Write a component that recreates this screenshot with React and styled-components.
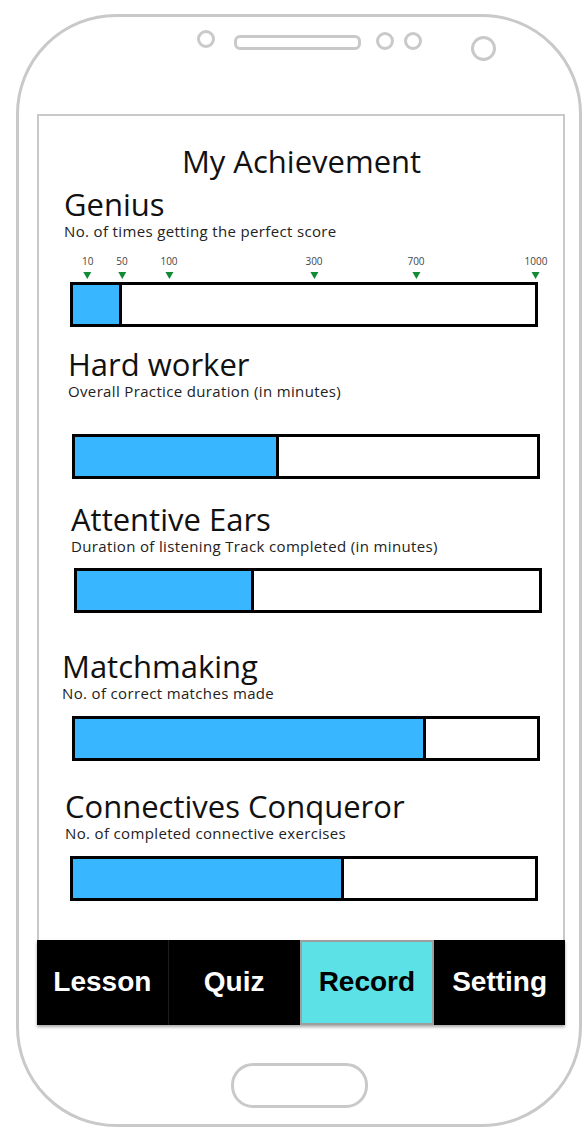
import React from 'react';
import styled, { createGlobalStyle } from 'styled-components';

// achievement screen inside a phone frame

const GlobalStyle = createGlobalStyle`
  body {
    margin: 0;
    background: #fff;
    font-family: "Open Sans", "Liberation Sans", sans-serif;
  }
`;

const Phone = styled.div`
  box-sizing: border-box;
  margin: 14px 0 0 16px;
  width: 566px;
  height: 1113px;
  border: 3px solid #c9c9c9;
  border-radius: 100px;
  display: flex;
  flex-direction: column;
  background: #fff;
`;

const Header = styled.div`
  height: 97px;
  display: flex;
  align-items: flex-start;
  padding: 13px 0 0 178px;
  box-sizing: border-box;
`;

const Dot = styled.div`
  box-sizing: border-box;
  width: ${(p) => p.$size}px;
  height: ${(p) => p.$size}px;
  border: 3px solid #c9c9c9;
  border-radius: 50%;
  margin-left: ${(p) => p.$gap || 0}px;
  margin-top: ${(p) => p.$drop || 0}px;
`;

const Speaker = styled.div`
  box-sizing: border-box;
  width: 127px;
  height: 15px;
  margin: 5px 0 0 19px;
  border: 3px solid #c9c9c9;
  border-radius: 6px;
`;

const Screen = styled.div`
  width: 528px;
  height: 911px;
  margin-left: 18px;
  display: flex;
  flex-direction: column;
`;

const Content = styled.div`
  flex: 1;
  box-sizing: border-box;
  border: 2px solid #c9c9c9;
  border-bottom: none;
  padding-top: 30px;
  display: flex;
  flex-direction: column;
`;

const Title = styled.h1`
  margin: 0;
  font-size: 31px;
  line-height: 31px;
  font-weight: 400;
  text-align: center;
  color: #111;
  padding-left: 1px;
`;

const Section = styled.section`
  margin-top: ${(p) => p.$top}px;
  display: flex;
  flex-direction: column;
`;

const Heading = styled.h2`
  margin: 0 0 5px ${(p) => p.$indent}px;
  font-size: 31px;
  line-height: 30px;
  font-weight: 400;
  color: #111;
`;

const Sub = styled.p`
  margin: 0 0 ${(p) => p.$gap}px ${(p) => p.$indent}px;
  font-size: 15px;
  line-height: 14px;
  letter-spacing: 0.35px;
  color: #222;
`;

const TickRow = styled.div`
  position: relative;
  width: 468px;
  height: 44px;
  margin-left: ${(p) => p.$indent}px;
`;

const Tick = styled.div`
  position: absolute;
  top: 18px;
  transform: translateX(-50%);
  display: flex;
  flex-direction: column;
  align-items: center;
  font-size: 10px;
  line-height: 11px;
  color: #444;
`;

const Arrow = styled.div`
  margin-top: 5px;
  width: 0;
  height: 0;
  border-left: 4.5px solid transparent;
  border-right: 4.5px solid transparent;
  border-top: 7px solid #138a36;
`;

const Bar = styled.div`
  box-sizing: border-box;
  width: 468px;
  height: 45px;
  margin-left: ${(p) => p.$indent}px;
  border: 3px solid #000;
  display: flex;
`;

const Fill = styled.div`
  box-sizing: border-box;
  height: 100%;
  background: #38b6ff;
  border-right: 3px solid #000;
`;

const Nav = styled.nav`
  height: 85px;
  display: flex;
  background: #000;
  box-shadow: 0 2px 3px rgba(0, 0, 0, 0.35);
`;

const Tab = styled.div`
  flex: 1;
  box-sizing: border-box;
  display: flex;
  align-items: center;
  justify-content: center;
  font-family: "Liberation Sans", Arial, sans-serif;
  font-weight: 700;
  font-size: 28px;
  padding-bottom: 2px;
  color: ${(p) => (p.$active ? '#000' : '#fff')};
  background: ${(p) => (p.$active ? '#5ce1e6' : '#000')};
  border: ${(p) => (p.$active ? '2px solid #9e9e9e' : 'none')};
  border-right: ${(p) => (p.$first ? '1px solid #1c1c1c' : '')};
`;

const Bottom = styled.div`
  flex: 1;
  display: flex;
  justify-content: center;
  padding-top: 38px;
`;

const HomeButton = styled.div`
  box-sizing: border-box;
  width: 137px;
  height: 45px;
  border: 3px solid #c9c9c9;
  border-radius: 22px;
`;

const ticks = [
  { label: '10', x: 17.7 },
  { label: '50', x: 52 },
  { label: '100', x: 99 },
  { label: '300', x: 244 },
  { label: '700', x: 346 },
  { label: '1000', x: 466 },
];

const achievements = [
  { title: 'Genius', sub: 'No. of times getting the perfect score', top: 12, text: 25, bar: 31, gap: 0, fill: 49, ticks: true },
  { title: 'Hard worker', sub: 'Overall Practice duration (in minutes)', top: 22, text: 29, bar: 33, gap: 36, fill: 204 },
  { title: 'Attentive Ears', sub: 'Duration of listening Track completed (in minutes)', top: 25, text: 32, bar: 35, gap: 15, fill: 177 },
  { title: 'Matchmaking', sub: 'No. of correct matches made', top: 38, text: 23, bar: 33, gap: 16, fill: 351 },
  { title: 'Connectives Conqueror', sub: 'No. of completed connective exercises', top: 30, text: 26, bar: 31, gap: 16, fill: 271 },
];

const tabs = ['Lesson', 'Quiz', 'Record', 'Setting'];

function App() {
  return (
    <>
      <GlobalStyle />
      <Phone>
        <Header>
          <Dot $size={18} />
          <Speaker />
          <Dot $size={18} $gap={15} $drop={2} />
          <Dot $size={18} $gap={10} $drop={2} />
          <Dot $size={25} $gap={49} $drop={6} />
        </Header>
        <Screen>
          <Content>
            <Title>My Achievement</Title>
            {achievements.map((a) => (
              <Section key={a.title} $top={a.top}>
                <Heading $indent={a.text}>{a.title}</Heading>
                <Sub $indent={a.text} $gap={a.gap}>{a.sub}</Sub>
                {a.ticks && (
                  <TickRow $indent={a.bar}>
                    {ticks.map((t) => (
                      <Tick key={t.label} style={{ left: t.x }}>
                        {t.label}
                        <Arrow />
                      </Tick>
                    ))}
                  </TickRow>
                )}
                <Bar $indent={a.bar}>
                  <Fill style={{ width: a.fill }} />
                </Bar>
              </Section>
            ))}
          </Content>
          <Nav>
            {tabs.map((t, i) => (
              <Tab key={t} $active={t === 'Record'} $first={i === 0}>
                {t}
              </Tab>
            ))}
          </Nav>
        </Screen>
        <Bottom>
          <HomeButton />
        </Bottom>
      </Phone>
    </>
  );
}

export default App;
